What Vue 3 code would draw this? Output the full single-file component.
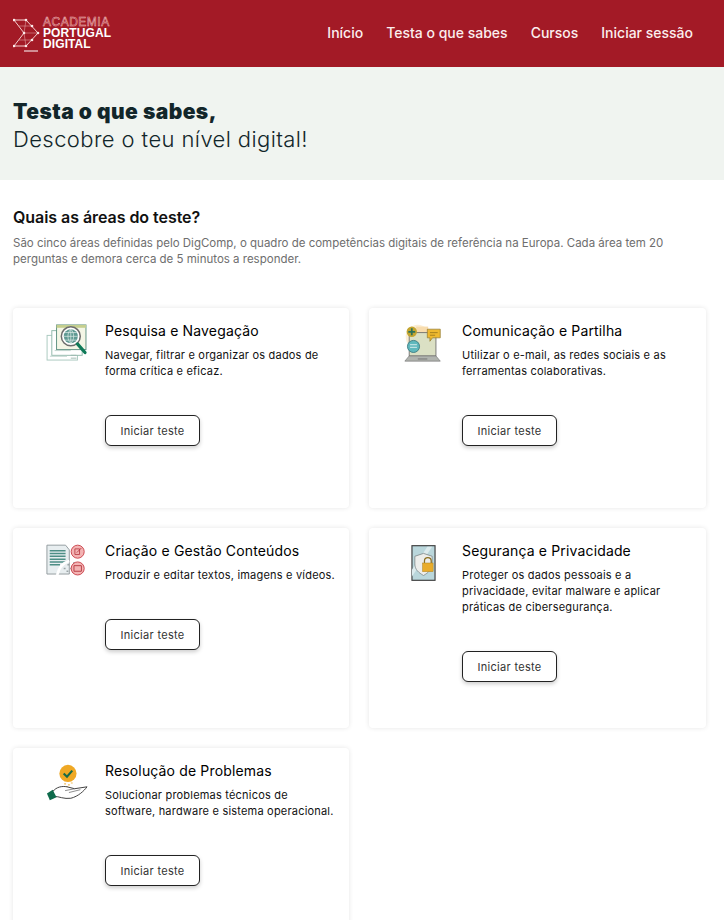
<template>
  <div class="page">
    <header class="topbar">
      <div class="logo">
        <svg class="logo-mark" width="27" height="34" viewBox="0 0 27 34" fill="none">
          <path d="M1 2H13L25 15L13 28H1L11 15Z" stroke="#f3cfcf" stroke-width="1" />
          <path d="M11 15H25M13 2L11 15L13 28M6 8L19 8M6 22H19" stroke="#e9b3b3" stroke-width="0.5" />
          <circle cx="1" cy="2" r="1.3" fill="#fbeaea" />
          <circle cx="13" cy="2" r="1.3" fill="#fbeaea" />
          <circle cx="19" cy="8" r="1.3" fill="#fbeaea" />
          <circle cx="25" cy="15" r="1.3" fill="#fbeaea" />
          <circle cx="11" cy="15" r="1.3" fill="#fbeaea" />
          <circle cx="19" cy="22" r="1.3" fill="#fbeaea" />
          <circle cx="13" cy="28" r="1.3" fill="#fbeaea" />
          <circle cx="1" cy="28" r="1.3" fill="#fbeaea" />
          <path d="M11 33H25" stroke="#fff" stroke-width="1" />
        </svg>
        <div class="logo-text">
          <span class="logo-top">ACADEMIA</span>
          <span>PORTUGAL</span>
          <span>DIGITAL</span>
        </div>
      </div>
      <nav class="nav">
        <a v-for="link in links" :key="link">{{ link }}</a>
      </nav>
    </header>

    <section class="hero">
      <h1>Testa o que sabes,</h1>
      <p>Descobre o teu nível digital!</p>
    </section>

    <section class="intro">
      <h2>Quais as áreas do teste?</h2>
      <p>São cinco áreas definidas pelo DigComp, o quadro de competências digitais de referência na Europa. Cada área tem 20 perguntas e demora cerca de 5 minutos a responder.</p>
    </section>

    <section class="cards">
      <article v-for="area in areas" :key="area.title" class="card">
        <div class="card-icon">
          <!-- pesquisa -->
          <svg v-if="area.icon === 'search'" width="42" height="37" viewBox="0 0 44 39" fill="none">
            <rect x="1" y="12" width="32" height="26" fill="#fff" stroke="#a9c9bf" />
            <rect x="6" y="7" width="32" height="26" fill="#fff" stroke="#8fb8aa" />
            <rect x="11" y="1" width="31" height="26" fill="#f4f6e6" stroke="#5d9080" />
            <path d="M11 1H42V4H11Z" fill="#c5cf8e" />
            <path d="M4 34H22M9 28H26" stroke="#bcd3cc" />
            <path d="M26 33h6M26 36h6" stroke="#9db9b0" />
            <circle cx="26" cy="13" r="10" fill="#fff" stroke="#6d6d6d" stroke-width="1.6" />
            <circle cx="26" cy="13" r="7.4" fill="#5f9a93" />
            <path d="M18.6 13H33.4M26 5.6V20.4M20 9H32M20 17H32M26 5.6C22 9 22 17 26 20.4M26 5.6C30 9 30 17 26 20.4" stroke="#e4f0ec" stroke-width="0.7" />
            <path d="M33 21L41 30" stroke="#0f7a58" stroke-width="3.4" stroke-linecap="round" />
          </svg>
          <!-- comunicação -->
          <svg v-else-if="area.icon === 'laptop'" width="38" height="38" viewBox="0 0 44 44" fill="none">
            <circle cx="16" cy="15" r="14" fill="#fbeed6" />
            <path d="M14 3H28V13H14Z" fill="#f8dcae" />
            <rect x="6" y="10" width="31" height="27" fill="#dbe0c4" stroke="#6b6b6b" />
            <path d="M1 43L6 37H37L42 43Z" fill="#b0b3ae" stroke="#777" stroke-width="0.8" />
            <path d="M16 40.5H27" stroke="#6d6d6d" />
            <circle cx="9" cy="9" r="6" fill="#c3a530" />
            <path d="M5 9H13M9 5V13" stroke="#2c7158" stroke-width="2" />
            <circle cx="11" cy="26" r="7" fill="#5fb8bd" stroke="#37777e" />
            <path d="M7 24H15M7 27H15" stroke="#e6f3f3" />
            <path d="M27 6H42V16H33L30 20V16H27Z" fill="#efb92f" stroke="#8f7730" stroke-width="0.8" />
            <path d="M30 10H39M30 13H36" stroke="#9c7a1c" />
          </svg>
          <!-- conteúdos -->
          <svg v-else-if="area.icon === 'doc'" width="41" height="34" viewBox="0 0 44 36" fill="none">
            <path d="M1 1H21L25 6V32H1Z" fill="#e8eef0" stroke="#8f989c" />
            <path d="M4 7H21M4 10H21M4 13H21M4 16H21M4 19H21M4 22H15" stroke="#4e8f86" stroke-width="1.6" />
            <path d="M12 33C14 24 18 20 25 18" stroke="#fff" stroke-width="3" />
            <path d="M19 26h2M23 22h2M26 26h2M22 29h2M29 20h2M28 30h2" stroke="#9aa4a6" stroke-width="1.5" />
            <circle cx="34" cy="8" r="7" fill="#f3b3b3" stroke="#c9424a" />
            <path d="M31 5H36V11H31ZM33 9L38 4" stroke="#b63a42" stroke-width="0.9" />
            <circle cx="34" cy="26" r="7" fill="#f3b3b3" stroke="#c9424a" />
            <path d="M30 23H38V29H30Z" stroke="#b63a42" />
          </svg>
          <!-- segurança -->
          <svg v-else-if="area.icon === 'shield'" width="25" height="38" viewBox="0 0 26 38" fill="none">
            <rect x="1" y="1" width="24" height="36" fill="#bad7dc" stroke="#3d3d3d" stroke-width="1.2" />
            <path d="M1 26L17 2H22L1 33Z" fill="#dcebee" />
            <path d="M13 9L22 12V20C22 26 18 29 13 32C8 29 4 26 4 20V12Z" fill="#ecedeb" stroke="#7b8486" stroke-width="0.8" />
            <path d="M14 19V17A3.4 3.4 0 0 1 21 17V19" stroke="#8a6e20" stroke-width="1.3" />
            <rect x="12" y="19" width="11" height="9" fill="#e9ac2b" stroke="#aa8120" stroke-width="0.5" />
          </svg>
          <!-- resolução -->
          <svg v-else width="42" height="38" viewBox="0 0 44 38" fill="none">
            <circle cx="23" cy="9" r="9" fill="#efa825" />
            <path d="M18.5 9L22 12.5L27.5 6" stroke="#166a48" stroke-width="2.2" />
            <path d="M19 20h2M23 21h2M26 19h2M21 23h2" stroke="#efbd5d" stroke-width="1.3" />
            <path d="M7 28C11 23 17 22 22 23L30 25L43 23C40 27 34 33 26 35C19 36 13 33 9 33Z" fill="#fff" stroke="#3b3b3b" />
            <path d="M20 27L30 25M24 29L36 26" stroke="#555" stroke-width="0.7" />
            <path d="M1 30L7 26L11 34L4 37Z" fill="#0f6b4c" />
          </svg>
        </div>
        <div class="card-body">
          <h3>{{ area.title }}</h3>
          <p>{{ area.text }}</p>
          <button type="button" class="start">Iniciar teste</button>
        </div>
      </article>
    </section>
  </div>
</template>

<script setup>
const links = ['Início', 'Testa o que sabes', 'Cursos', 'Iniciar sessão']

const areas = [
  {
    icon: 'search',
    title: 'Pesquisa e Navegação',
    text: 'Navegar, filtrar e organizar os dados de forma crítica e eficaz.'
  },
  {
    icon: 'laptop',
    title: 'Comunicação e Partilha',
    text: 'Utilizar o e-mail, as redes sociais e as ferramentas colaborativas.'
  },
  {
    icon: 'doc',
    title: 'Criação e Gestão Conteúdos',
    text: 'Produzir e editar textos, imagens e vídeos.'
  },
  {
    icon: 'shield',
    title: 'Segurança e Privacidade',
    text: 'Proteger os dados pessoais e a privacidade, evitar malware e aplicar práticas de cibersegurança.'
  },
  {
    icon: 'hand',
    title: 'Resolução de Problemas',
    text: 'Solucionar problemas técnicos de software, hardware e sistema operacional.'
  }
]
</script>

<style>
html, body { background: #fff; }
</style>

<style scoped>
.page {
  font-family: Inter, "Noto Sans", sans-serif;
  color: #000;
}

.topbar {
  height: 67px;
  background: #a31a26;
  display: flex;
  align-items: center;
  justify-content: space-between;
  padding: 0 31px 0 13px;
}

.logo {
  display: flex;
  align-items: center;
  gap: 3px;
}

.logo-mark { display: block; margin-top: 2px; }

.logo-text {
  display: flex;
  flex-direction: column;
  color: #fff;
  font-family: "Liberation Sans", sans-serif;
  font-weight: 700;
  font-size: 12px;
  line-height: 11px;
  letter-spacing: 0.1px;
}

.logo-top {
  color: transparent;
  -webkit-text-stroke: 0.5px #f0bcbc;
  letter-spacing: 0.5px;
  font-weight: 400;
}

.nav {
  display: flex;
  gap: 23px;
  margin-top: -2px;
}

.nav a {
  color: #fbeeee;
  font-size: 14px;
  font-weight: 500;
}

.hero {
  height: 113px;
  box-sizing: border-box;
  background: #f0f4f0;
  padding: 31px 13px 0;
  color: #12262a;
}

.hero h1 {
  margin: 0;
  font-size: 21px;
  line-height: 27px;
  font-weight: 900;
  letter-spacing: 0.45px;
}

.hero p {
  margin: 0;
  font-size: 22px;
  line-height: 29px;
  font-weight: 300;
  letter-spacing: 0.4px;
}

.intro {
  padding: 27px 13px 0;
}

.intro h2 {
  margin: 0 0 8px;
  font-size: 16px;
  line-height: 20px;
  font-weight: 600;
  letter-spacing: -0.05px;
  color: #111;
}

.intro p {
  margin: 0;
  font-size: 11.5px;
  line-height: 16px;
  color: #6e6e6e;
}

.cards {
  display: grid;
  grid-template-columns: 336px 337px;
  gap: 20px;
  padding: 41px 18px 0 13px;
}

.card {
  height: 200px;
  box-sizing: border-box;
  background: #fff;
  border-radius: 4px;
  box-shadow: 0 0 5px rgba(0, 0, 0, 0.1);
  display: flex;
  padding: 13px 10px 0 0;
}

.card-icon {
  width: 92px;
  flex: none;
  display: flex;
  justify-content: center;
  padding: 3px 0 0 15px;
  box-sizing: border-box;
}

.card:nth-child(even) .card-icon { width: 93px; }

.card-icon svg { display: block; }

.card-body h3 {
  margin: 0 0 6px;
  font-size: 14px;
  line-height: 20px;
  font-weight: 400;
  letter-spacing: 0.15px;
}

.card-body p {
  margin: 0;
  font-size: 11px;
  line-height: 16px;
  letter-spacing: 0.2px;
  color: #111;
}

.start {
  display: block;
  margin-top: 36px;
  width: 95px;
  height: 31px;
  padding: 0;
  background: #fff;
  border: 1px solid #222;
  border-radius: 6px;
  box-shadow: 0 2px 4px rgba(0, 0, 0, 0.2);
  font-family: inherit;
  font-size: 11px;
  letter-spacing: 0.3px;
  color: #333;
}
</style>
